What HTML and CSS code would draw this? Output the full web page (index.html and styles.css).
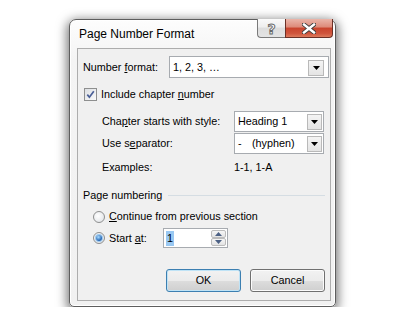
FILE: index.html
```html
<!DOCTYPE html>
<html>
<head>
<meta charset="utf-8">
<title>Page Number Format</title>
<link rel="stylesheet" href="styles.css">
</head>
<body>
<div class="window">
  <div class="titlebar">
    <span class="title">Page Number Format</span>
    <div class="caption">
      <div class="cap-btn help"><span>?</span></div>
      <div class="cap-btn close">
        <svg width="14" height="11" viewBox="0 0 14 11">
          <path d="M2 1.5 L12 9.5 M12 1.5 L2 9.5" stroke="#3a3a3a" stroke-width="4.2" stroke-linecap="square" fill="none"/>
          <path d="M2 1.5 L12 9.5 M12 1.5 L2 9.5" stroke="#ffffff" stroke-width="2.4" stroke-linecap="square" fill="none"/>
        </svg>
      </div>
    </div>
  </div>
  <div class="client">
    <div class="row row-format">
      <span class="lbl-format">Number <u>f</u>ormat:</span>
      <div class="combo combo-wide">
        <span class="combo-text">1, 2, 3, …</span>
        <span class="dd dd-wide"><svg width="7" height="4" viewBox="0 0 7 4"><path d="M0 0 H7 L3.5 4 Z" fill="#000"/></svg></span>
      </div>
    </div>
    <div class="row row-check">
      <span class="checkbox">
        <svg width="11" height="11" viewBox="0 0 11 11"><path d="M2.3 5.6 L4.4 8.2 L8.8 2.2" stroke="#4a5f97" stroke-width="1.7" fill="none"/></svg>
      </span>
      <span>Include chapter <u>n</u>umber</span>
    </div>
    <div class="row row-sub row-style">
      <span class="lbl-sub">Cha<u>p</u>ter starts with style:</span>
      <div class="combo combo-small">
        <span class="combo-text">Heading 1</span>
        <span class="dd dd-small"><svg width="7" height="4" viewBox="0 0 7 4"><path d="M0 0 H7 L3.5 4 Z" fill="#000"/></svg></span>
      </div>
    </div>
    <div class="row row-sub row-sep">
      <span class="lbl-sub">Use s<u>e</u>parator:</span>
      <div class="combo combo-small">
        <span class="combo-text"><span class="hyph">-</span>(hyphen)</span>
        <span class="dd dd-small"><svg width="7" height="4" viewBox="0 0 7 4"><path d="M0 0 H7 L3.5 4 Z" fill="#000"/></svg></span>
      </div>
    </div>
    <div class="row row-sub row-examples">
      <span class="lbl-sub">Examples:</span>
      <span>1-1, 1-A</span>
    </div>
    <div class="group-head">
      <span>Page numbering</span>
      <span class="rule"></span>
    </div>
    <div class="row row-radio">
      <span class="radio"></span>
      <span><u>C</u>ontinue from previous section</span>
    </div>
    <div class="row row-radio row-start">
      <span class="radio checked"></span>
      <span class="lbl-start">Start <u>a</u>t:</span>
      <div class="spin">
        <span class="spin-text"><span class="sel">1</span></span>
        <span class="spin-btns">
          <span class="spin-btn"><svg width="7" height="4" viewBox="0 0 7 4"><path d="M0 4 H7 L3.5 0 Z" fill="#4c6185"/></svg></span>
          <span class="spin-btn"><svg width="7" height="4" viewBox="0 0 7 4"><path d="M0 0 H7 L3.5 4 Z" fill="#4c6185"/></svg></span>
        </span>
      </div>
    </div>
    <div class="buttons">
      <div class="btn btn-default">OK</div>
      <div class="btn">Cancel</div>
    </div>
  </div>
</div>
</body>
</html>
```

FILE: styles.css
```css
* { box-sizing: border-box; }
html, body { margin: 0; padding: 0; background: #ffffff; }
body {
  padding: 19px 0 0 69px;
  font-family: "Liberation Sans", Arial, sans-serif;
  font-size: 10.8px;
  line-height: 13px;
  color: #000;
}
u { text-decoration: underline; text-underline-offset: 1px; }

.window {
  width: 267px;
  height: 288px;
  border: 1px solid #5e5e5e;
  border-radius: 7px 7px 5px 5px;
  background: linear-gradient(#fdfdfd, #f4f4f4 40px, #f1f1f1);
  box-shadow: 0 3px 11px 2px rgba(0,0,0,0.55), inset 0 0 0 1px #ffffff;
  padding: 0 4px 5px 7px;
  display: flex;
  flex-direction: column;
}

.titlebar { height: 28px; flex: none; display: flex; align-items: center; }
.title { flex: 1; font-size: 12px; padding-left: 2px; padding-top: 1px; color: #000; }
.caption { align-self: flex-start; display: flex; height: 19px; margin: -1px -2px 0 0; }
.cap-btn { height: 19px; border: 1px solid #7a7a7a; border-top: none; display: flex; align-items: center; justify-content: center; }
.help {
  width: 28px;
  border-right: none;
  border-radius: 0 0 0 4px;
  background: linear-gradient(#fafafa, #eeeeee 45%, #dddddd 50%, #e4e4e4);
}
.help span {
  font: bold 14px/14px "DejaVu Sans", sans-serif;
  color: #ffffff;
  -webkit-text-stroke: 1px #6a6a6a;
  margin-top: 1px;
}
.close {
  width: 48px;
  border-color: #6b3026;
  border-radius: 0 0 4px 0;
  background: linear-gradient(#eab6aa, #dd8a79 45%, #c9442d 50%, #d0553d 80%, #dd7a5c);
}

.client {
  flex: 1;
  border: 1px solid #adadad;
  background: #f0f0f0;
  padding: 7px 0 0 5px;
  display: flex;
  flex-direction: column;
}
.row { display: flex; align-items: center; flex: none; }

.row-format { height: 22px; }
.lbl-format { width: 86px; }
.combo {
  display: flex;
  align-items: center;
  background: #ffffff;
  border: 1px solid #a7abb0;
}
.combo-wide { width: 160px; height: 22px; padding-left: 3px; }
.combo-small { width: 90px; height: 21px; padding-left: 3px; }
.combo-text { flex: 1; white-space: nowrap; }
.hyph { display: inline-block; width: 14px; }
.dd {
  display: flex;
  align-items: center;
  justify-content: center;
  border: 1px solid #b9b9b9;
  background: linear-gradient(#f4f4f4, #e4e4e4);
}
.dd-wide { width: 16px; height: 16px; margin: 2px 4px 0 0; }
.dd-small { width: 15px; height: 16px; margin-right: 1px; }

.row-check { height: 13px; margin-top: 10px; }
.checkbox {
  width: 13px;
  height: 13px;
  margin: 0 4px 0 1px;
  border: 1px solid #8e8f8f;
  background: linear-gradient(135deg, #dcdfe3, #fafafa);
  display: flex;
  align-items: center;
  justify-content: center;
}

.row-sub { padding-left: 19px; }
.lbl-sub { width: 132px; }
.row-style { margin-top: 10px; height: 21px; }
.row-sep { margin-top: 1px; height: 21px; }
.row-examples { margin-top: 7px; height: 13px; }

.group-head { display: flex; align-items: center; height: 13px; margin-top: 15px; }
.rule { flex: 1; height: 1px; background: #d5dde3; margin: 0 5px 0 6px; }

.row-radio { padding-left: 10px; height: 13px; margin-top: 8px; }
.radio {
  width: 12px;
  height: 12px;
  margin-right: 4px;
  border-radius: 50%;
  border: 1px solid #8e8f8f;
  background: radial-gradient(circle at 40% 40%, #ffffff, #dcdfe3);
  display: flex;
  align-items: center;
  justify-content: center;
}
.radio.checked::after {
  content: "";
  width: 6px;
  height: 6px;
  border-radius: 50%;
  background: radial-gradient(circle at 40% 35%, #a9dcff, #1c5fb0 70%, #0d3f86);
  box-shadow: 0 0 0 1px #9cc8ee;
}
.row-start { height: 20px; margin-top: 5px; }
.lbl-start { width: 54px; }
.spin {
  width: 65px;
  height: 20px;
  display: flex;
  background: #ffffff;
  border: 1px solid #a7abb0;
}
.spin-text { flex: 1; display: flex; align-items: center; padding-left: 2px; }
.sel { background: #99c8f2; padding: 1px 1px; line-height: 13px; }
.spin-btns { width: 16px; display: flex; flex-direction: column; padding: 1px 1px 1px 0; gap: 0; }
.spin-btn {
  flex: 1;
  display: flex;
  align-items: center;
  justify-content: center;
  border: 1px solid #bcbcbc;
  border-radius: 2px;
  background: linear-gradient(#f6f6f6, #e3e3e3);
}

.buttons { display: flex; justify-content: flex-end; gap: 9px; padding-right: 5px; margin-top: 21px; flex: none; }
.btn {
  width: 75px;
  height: 23px;
  display: flex;
  align-items: center;
  justify-content: center;
  border: 1px solid #707070;
  border-radius: 3px;
  background: linear-gradient(#f2f2f2, #ebebeb 50%, #dddddd 51%, #cfcfcf);
  box-shadow: inset 0 0 0 1px #fbfbfb;
}
.btn-default {
  border-color: #3c7fb1;
  box-shadow: inset 0 0 0 1px #bfe3f6;
}
```
